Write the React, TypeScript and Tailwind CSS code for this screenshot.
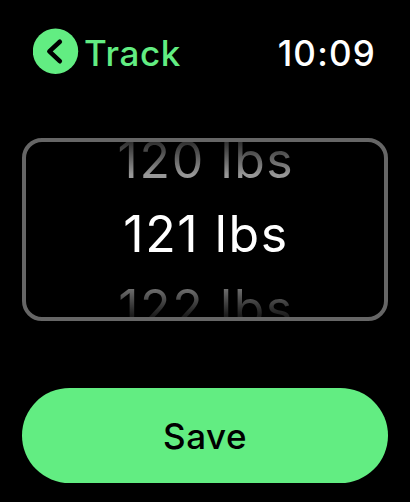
export default function App() {
  return (
    <main className="flex h-[502px] w-[410px] flex-col overflow-hidden bg-black px-[22px] font-['Inter',sans-serif]">
      <header className="flex h-[138px] shrink-0 items-start justify-between pt-[28px] pr-[12px] pl-[11px]">
        <button className="flex items-start gap-[5px] text-[#62ed82]">
          <svg viewBox="0 0 46 46" className="h-[46px] w-[46px]" fill="none">
            <circle cx="22.5" cy="23.2" r="22.7" fill="#62ed82" />
            <path d="M26.8 13.8 16.4 23.4l10.4 9.8" stroke="#000" strokeWidth="4.6" strokeLinecap="round" strokeLinejoin="round" />
          </svg>
          <span className="pt-[3px] text-[35px] leading-[44px] font-medium tracking-[0.6px]">Track</span>
        </button>
        <time className="pt-[3px] text-[35px] leading-[44px] font-medium tracking-[1.2px] text-white">10:09</time>
      </header>

      <section className="flex h-[183px] shrink-0 flex-col items-center justify-center overflow-hidden rounded-[20px] border-[4px] border-[#666666] pt-[8px] pl-[2px] text-[50px] leading-[74px] tracking-[1.6px] whitespace-nowrap text-white">
        <div className="h-[74px] shrink-0 bg-linear-to-b from-[#282828] from-22% to-[#989898] to-70% bg-clip-text text-transparent">120 lbs</div>
        <div className="h-[74px] shrink-0">121 lbs</div>
        <div className="h-[74px] shrink-0 bg-linear-to-b from-[#747474] from-22% to-[#1c1c1c] to-60% bg-clip-text text-transparent">122 lbs</div>
      </section>

      <button className="mt-[66.5px] flex h-[95px] shrink-0 items-center justify-center rounded-full bg-[#62ed82] pt-[2px] text-[35px] font-medium tracking-[0.5px] text-black">
        Save
      </button>
    </main>
  );
}
